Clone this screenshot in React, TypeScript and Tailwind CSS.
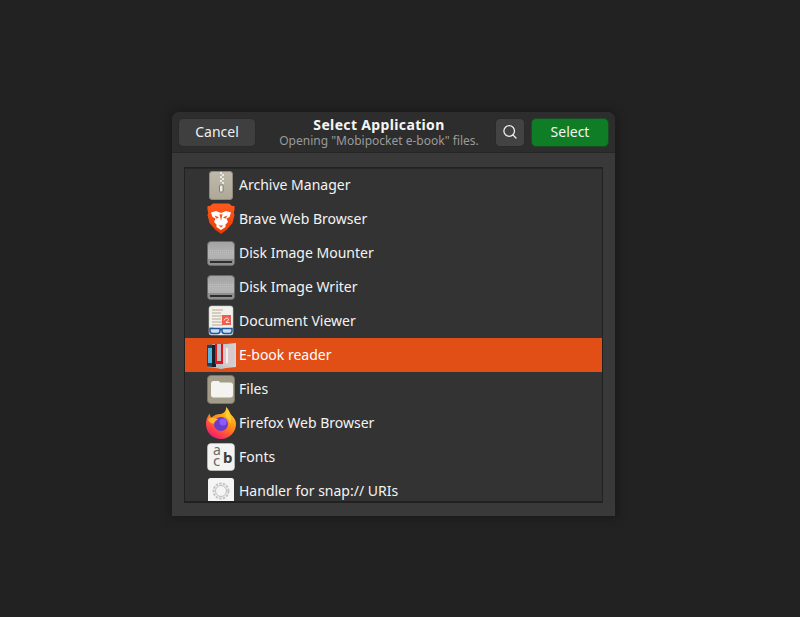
import React from 'react'

function ArchiveIcon() {
  return (
    <svg width="32" height="32" viewBox="0 0 32 32">
      <defs>
        <linearGradient id="arc" x1="0" y1="0" x2="0" y2="1">
          <stop offset="0" stopColor="#bfb9aa" />
          <stop offset="1" stopColor="#aea899" />
        </linearGradient>
      </defs>
      <rect x="4.500" y="2.500" width="23" height="28" rx="2.500" fill="url(#arc)" stroke="#8f8a79" />
      <path d="M15 3h2v2h-2zM17 5h2v2h-2zM15 7h2v2h-2zM17 9h2v2h-2zM15 11h2v2h-2zM17 13h2v2h-2z" fill="#ebe9e3" />
      <rect x="14.500" y="16" width="3.500" height="7" rx="1" fill="#f0eee8" stroke="#6f6a58" strokeWidth="0.8" />
    </svg>
  )
}

function BraveIcon() {
  return (
    <svg width="32" height="32" viewBox="0 0 32 32">
      <defs>
        <linearGradient id="brv" x1="0" y1="0" x2="0" y2="1">
          <stop offset="0" stopColor="#ff5a1e" />
          <stop offset="1" stopColor="#f03a00" />
        </linearGradient>
      </defs>
      <path d="M8 0.500h16l3 2.500 2.500 0 0 4-0.800 2.500 0.800 2.500-2 8-5.500 6.500-5.500 4-.5.500-.5-.5-5.500-4-5.500-6.500-2-8 .8-2.500-.8-2.500 0-4 2.500 0z" fill="url(#brv)" />
      <path d="M6 9.500l5-1.500 5 2 5-2 5 1.500-1.500 4.500-3 1.500 1.500 3.500-2.500 2.500v2.500l-4.500 3-4.500-3v-2.500l-2.500-2.500 1.500-3.500-3-1.500z" fill="#ffffff" />
      <path d="M9.500 12.500l4.500 1.800-2.500 1.500zM22.500 12.500l-4.500 1.800 2.500 1.500zM13.500 22.500h5l-2.500 2zM14.500 11l1.500 7 1.500-7-1.500.6z" fill="#f4511e" />
    </svg>
  )
}

function DiskIcon() {
  return (
    <svg width="32" height="32" viewBox="0 0 32 32">
      <defs>
        <linearGradient id="dsk" x1="0" y1="0" x2="0" y2="1">
          <stop offset="0" stopColor="#a2a2a2" />
          <stop offset="0.55" stopColor="#b4b4b4" />
          <stop offset="1" stopColor="#a8a8a8" />
        </linearGradient>
      </defs>
      <rect x="2.500" y="4.500" width="27" height="24" rx="3.500" fill="url(#dsk)" stroke="#6a6a6a" />
      <path d="M3 13.500h26M3 15.500h26" stroke="#bdbdbd" strokeWidth="1" strokeDasharray="1 1" />
      <path d="M3 22h26v3.500a2.500 2.500 0 0 1-2.500 2.500h-21A2.500 2.500 0 0 1 3 25.500z" fill="#8e8e8e" />
      <rect x="5" y="24" width="22" height="2" fill="#2e2e2e" />
    </svg>
  )
}

function DocIcon() {
  return (
    <svg width="32" height="32" viewBox="0 0 32 32">
      <rect x="4" y="1" width="24" height="29" rx="2.500" fill="#f3f1ed" stroke="#c8c6c0" strokeWidth="0.6" />
      <path d="M7 5h11M7 8h9M7 11h10M7 14h9M7 17h10M7 20h11" stroke="#b7a88f" strokeWidth="1" />
      <rect x="17" y="10" width="9" height="10" fill="#ee5f4e" />
      <path d="M19 15.500c1-3 4.500-3 4.500-1s-3.500 2-2.500 3h3.500" stroke="#fff" strokeWidth="0.8" fill="none" />
      <path d="M4.500 22h4v7h-2a2 2 0 0 1-2-2z" fill="#b9d2e6" />
      <path d="M5 23.500h10v2.500c0 1.500-1 2.500-2.500 2.500h-5C6 28.500 5 27.500 5 26zM17 23.500h10v2.500c0 1.500-1 2.500-2.500 2.500h-5c-1.500 0-2.500-1-2.500-2.500z" fill="#c9def0" stroke="#23579f" strokeWidth="1.500" />
      <path d="M15 24.500h2" stroke="#23579f" strokeWidth="1.500" />
    </svg>
  )
}

function EbookIcon() {
  return (
    <svg width="32" height="32" viewBox="0 0 32 32">
      <defs>
        <linearGradient id="ebk" x1="0" y1="0" x2="1" y2="0">
          <stop offset="0" stopColor="#a9b4bb" />
          <stop offset="1" stopColor="#d3d6d8" />
        </linearGradient>
      </defs>
      <path d="M2 6l9-1h10l10-1v24l-10 1-5 1-5-1-9-1z" fill="url(#ebk)" />
      <path d="M2 6l5-.5v22.500l-5-.5z" fill="#2a3f50" />
      <rect x="3" y="9" width="4" height="15" fill="#55b5e0" />
      <path d="M7 6h4v22H7z" fill="#18202a" />
      <path d="M10 5h2v17h4V5h2v20h-8z" fill="#dc161d" />
      <path d="M18 8c4-1 8-1 11-2v19c-3 1-7 1-11 2z" fill="#d9c9cc" />
      <path d="M21 9l2 0v15l-2 .3z" fill="#eef0f1" />
    </svg>
  )
}

function FilesIcon() {
  return (
    <svg width="32" height="32" viewBox="0 0 32 32">
      <rect x="2.500" y="2.500" width="27" height="28" rx="3.500" fill="#a39c88" stroke="#7b7564" />
      <path d="M6 10.500c0-1.500 1-2.500 2.500-2.500h4.500c1 0 1.500.5 2 1.500h10.500c1.500 0 2.500 1 2.500 2.500v10c0 1.500-1 2.500-2.500 2.500h-17C7 24.500 6 23.500 6 22z" fill="#f5f3ef" />
    </svg>
  )
}

function FirefoxIcon() {
  return (
    <svg width="32" height="32" viewBox="0 0 32 32">
      <defs>
        <linearGradient id="fx" x1="0.8" y1="0" x2="0.2" y2="1">
          <stop offset="0" stopColor="#ffdc3e" />
          <stop offset="0.45" stopColor="#ff8a16" />
          <stop offset="0.8" stopColor="#ff3750" />
          <stop offset="1" stopColor="#e31587" />
        </linearGradient>
      </defs>
      <path d="M21 0c3.500 3 3.500 5.500 5 7.500 3 3 5 5.500 5 9.500C31 25 24.500 32 16 32S1 25.500 1 17c0-4.500 1.500-8 4-10.500-.2 1.500.3 3 1.500 4C9 8 12.500 7 16 7c3.500-1 5.500-3.500 5-7z" fill="url(#fx)" />
      <circle cx="16" cy="17" r="7" fill="#6a3dc8" />
      <circle cx="18" cy="15" r="3.500" fill="#9059ff" />
      <path d="M3 12c3-2 7-1.500 10 .5-2 1-3.500 2-4 4-3 .3-5-1.500-6-4.500z" fill="#ffb52e" />
      <path d="M21 2c4 3.500 6 9 4.500 15-1-3.500-2.500-6-5.500-8 1.500-2 1.500-4.500 1-7z" fill="#ffcf2e" />
    </svg>
  )
}

function FontsIcon() {
  return (
    <svg width="32" height="32" viewBox="0 0 32 32">
      <rect x="2.500" y="2.500" width="27" height="27" rx="3.500" fill="#f3f3f1" stroke="#cfcfcb" strokeWidth="0.6" />
      <text x="8" y="14" fontSize="14" fontFamily="Noto Sans, sans-serif" fill="#6a6a6a">a</text>
      <text x="8" y="25" fontSize="15" fontFamily="Noto Sans, sans-serif" fill="#6a6a6a">c</text>
      <text x="18" y="22" fontSize="15" fontWeight="700" fontFamily="Noto Sans, sans-serif" fill="#3a3a3a">b</text>
    </svg>
  )
}

function SnapIcon() {
  return (
    <svg width="32" height="32" viewBox="0 0 32 32">
      <rect x="3" y="3" width="26" height="27" rx="2.500" fill="#f5f5f5" />
      <circle cx="16" cy="16" r="7.500" fill="none" stroke="#c4c4c4" strokeWidth="2" strokeDasharray="2.500 1.200" />
      <circle cx="16" cy="16" r="5.500" fill="none" stroke="#bdbdbd" strokeWidth="1" />
    </svg>
  )
}

function SearchGlyph() {
  return (
    <svg width="16" height="16" viewBox="0 0 16 16" fill="none" stroke="#eeeeee" strokeWidth="1.300">
      <circle cx="7.200" cy="7" r="5.300" />
      <path d="M11 11l3 3" strokeLinecap="round" />
    </svg>
  )
}

const apps = [
  { name: 'Archive Manager', icon: <ArchiveIcon /> },
  { name: 'Brave Web Browser', icon: <BraveIcon /> },
  { name: 'Disk Image Mounter', icon: <DiskIcon /> },
  { name: 'Disk Image Writer', icon: <DiskIcon /> },
  { name: 'Document Viewer', icon: <DocIcon /> },
  { name: 'E-book reader', icon: <EbookIcon />, selected: true },
  { name: 'Files', icon: <FilesIcon /> },
  { name: 'Firefox Web Browser', icon: <FirefoxIcon /> },
  { name: 'Fonts', icon: <FontsIcon /> },
  { name: 'Handler for snap:// URIs', icon: <SnapIcon /> },
]

export default function App() {
  return (
    <div className="min-h-[617px] bg-[#222222] pt-[112px] pl-[172px] font-['Noto_Sans',sans-serif] text-[14px] text-[#f3f3f3]">
      <div className="w-[443px] h-[404px] flex flex-col rounded-t-[8px] bg-[#393939] shadow-[0_0_10px_2px_#1a1a1a] overflow-hidden">
        <div className="h-[41px] shrink-0 flex items-center gap-[6px] px-[6px] bg-[#2d2d2d] border-b border-[#262626]">
          <button className="w-[78px] h-[29px] pb-[2px] rounded-[5px] bg-[#3f3f3f] border border-[#2a2a2a] text-[14px] text-[#eeeeee]">Cancel</button>
          <div className="flex-1 flex flex-col items-center pl-[7px] pt-[2px]">
            <span className="text-[14px] leading-[16px] font-bold tracking-[0.35px] text-[#f5f5f5]">Select Application</span>
            <span className="text-[12px] leading-[16px] text-[#9a9a9a]">Opening "Mobipocket e-book" files.</span>
          </div>
          <button className="w-[30px] h-[29px] rounded-[5px] bg-[#434343] border border-[#2a2a2a] flex items-center justify-center">
            <SearchGlyph />
          </button>
          <button className="w-[78px] h-[29px] pb-[2px] rounded-[5px] bg-[#0f7d25] border border-[#1d4a26] text-[14px] text-[#f3f3f3]">Select</button>
        </div>
        <div className="flex-1 min-h-0 px-[12px] pt-[14px] pb-[13px]">
          <div className="h-full border border-[#212121] border-b-2 overflow-hidden bg-[#333333] shadow-[inset_0_1px_0_#272727]">
            {apps.map((app) => (
              <div
                key={app.name}
                className={`h-[34px] flex items-center gap-[2px] pl-[20px] ${app.selected ? 'bg-[#e14e16] text-white' : ''}`}
              >
                {app.icon}
                <span className="pb-[2px]">{app.name}</span>
              </div>
            ))}
          </div>
        </div>
      </div>
    </div>
  )
}
